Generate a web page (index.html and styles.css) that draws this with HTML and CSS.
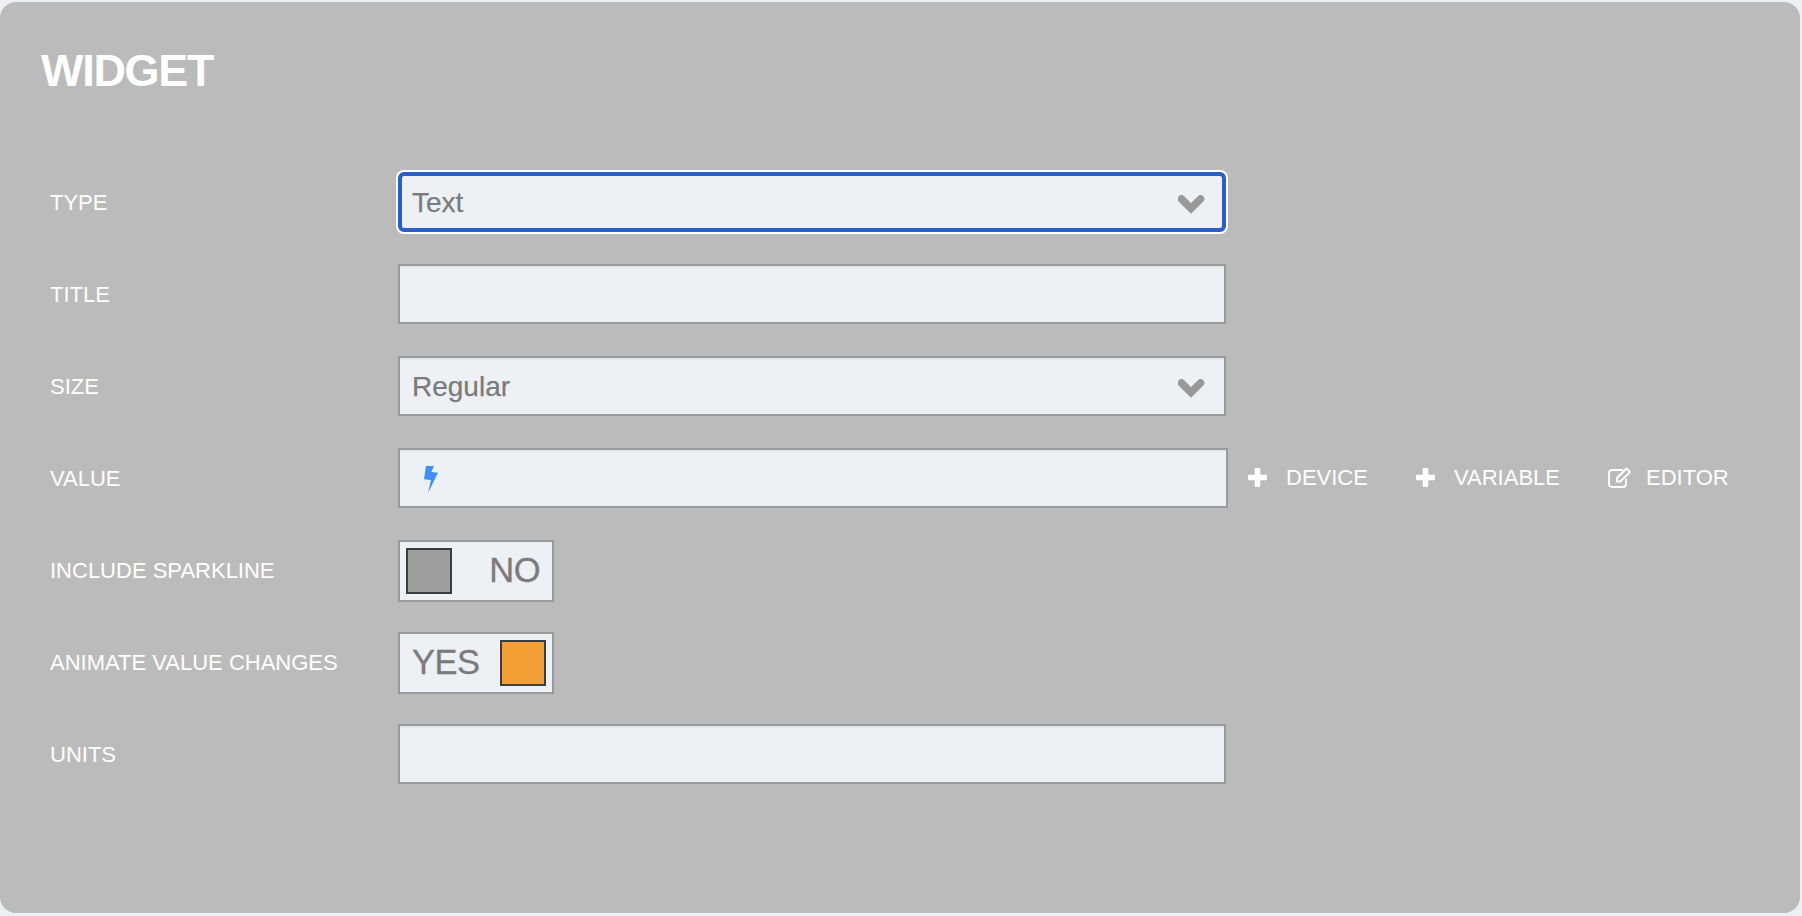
FILE: index.html
```html
<!DOCTYPE html>
<html lang="en">
<head>
<meta charset="utf-8">
<title>Widget</title>
<link rel="stylesheet" href="styles.css">
</head>
<body>
<main class="panel">
  <h1 class="title">WIDGET</h1>
  <form class="form">
    <div class="row">
      <label class="label">TYPE</label>
      <div class="field">
        <div class="box box-focus"><span class="box-text">Text</span>
          <svg class="chevron" viewBox="0 0 28 20"><polyline points="3.500,5 13,14.500 22.500,5"/></svg>
        </div>
      </div>
    </div>
    <div class="row">
      <label class="label">TITLE</label>
      <div class="field"><div class="box"></div></div>
    </div>
    <div class="row">
      <label class="label">SIZE</label>
      <div class="field">
        <div class="box"><span class="box-text">Regular</span>
          <svg class="chevron" viewBox="0 0 28 20"><polyline points="3.500,5 13,14.500 22.500,5"/></svg>
        </div>
      </div>
    </div>
    <div class="row">
      <label class="label">VALUE</label>
      <div class="field">
        <div class="box box-wide">
          <svg class="bolt" viewBox="0 0 14 28"><polygon points="2,0 10,0 7.300,6 14,6.700 4,27 7,14 0,13.300"/></svg>
        </div>
        <div class="actions">
          <span class="action action-device"><svg class="plus" viewBox="0 0 19 19"><path d="M6.700 1a1 1 0 0 1 1-1h3.600a1 1 0 0 1 1 1v5.700H18a1 1 0 0 1 1 1v3.600a1 1 0 0 1-1 1h-5.700V18a1 1 0 0 1-1 1H7.700a1 1 0 0 1-1-1v-5.700H1a1 1 0 0 1-1-1V7.700a1 1 0 0 1 1-1h5.700z"/></svg>DEVICE</span>
          <span class="action action-variable"><svg class="plus" viewBox="0 0 19 19"><path d="M6.700 1a1 1 0 0 1 1-1h3.600a1 1 0 0 1 1 1v5.700H18a1 1 0 0 1 1 1v3.600a1 1 0 0 1-1 1h-5.700V18a1 1 0 0 1-1 1H7.700a1 1 0 0 1-1-1v-5.700H1a1 1 0 0 1-1-1V7.700a1 1 0 0 1 1-1h5.700z"/></svg>VARIABLE</span>
          <span class="action action-editor"><svg class="edit" viewBox="0 0 24 21"><path class="edit-frame" d="M18 12v5a3 3 0 0 1-3 3H4a3 3 0 0 1-3-3V6a3 3 0 0 1 3-3h11"/><path class="edit-pen" d="M9 11 18.500 1.500l3.500 3.500L12.500 14.500H9z"/></svg>EDITOR</span>
        </div>
      </div>
    </div>
    <div class="row">
      <label class="label">INCLUDE SPARKLINE</label>
      <div class="field">
        <div class="toggle toggle-off"><span class="knob"></span><span class="toggle-text">NO</span></div>
      </div>
    </div>
    <div class="row">
      <label class="label">ANIMATE VALUE CHANGES</label>
      <div class="field">
        <div class="toggle toggle-on"><span class="toggle-text">YES</span><span class="knob"></span></div>
      </div>
    </div>
    <div class="row">
      <label class="label">UNITS</label>
      <div class="field"><div class="box"></div></div>
    </div>
  </form>
</main>
</body>
</html>
```
FILE: styles.css
```css
html, body {
  margin: 0;
  height: 100%;
}
body {
  background: #edf0f5;
  font-family: "Liberation Sans", Arial, sans-serif;
  padding: 2px 2px 3px 0;
  box-sizing: border-box;
  overflow: hidden;
}
.panel {
  height: 100%;
  box-sizing: border-box;
  background: #bbbbbb;
  border-radius: 16px;
  padding: 44px 0 0 50px;
}
.title {
  margin: 0 0 0 -9px;
  font-size: 45px;
  line-height: 50px;
  font-weight: 700;
  letter-spacing: -1.3px;
  color: #fff;
}
.form {
  margin-top: 76px;
  display: flex;
  flex-direction: column;
  gap: 32px;
}
.row {
  display: flex;
  align-items: center;
  height: 60px;
}
.label {
  width: 348px;
  flex: none;
  padding-top: 2px;
  font-size: 22px;
  color: #fff;
}
.field {
  display: flex;
  align-items: center;
}
.box {
  position: relative;
  box-sizing: border-box;
  width: 828px;
  height: 60px;
  display: flex;
  align-items: center;
  padding: 1px 0 0 12px;
  background: #edf0f5;
  border: 2px solid #9a9a9a;
  box-shadow: inset 0 2px 1px #e3e6ea;
}
.box-wide {
  width: 830px;
}
.box-focus {
  border: 4px solid #2a5fc8;
  border-radius: 6px;
  padding-left: 10px;
  box-shadow: 0 0 0 2px #fff;
}
.box-text {
  font-size: 28px;
  color: #7b7b7b;
  -webkit-text-stroke: 0.25px #7b7b7b;
}
.chevron {
  position: absolute;
  right: 18px;
  top: 50%;
  width: 28px;
  height: 20px;
  margin-top: 2px;
  transform: translateY(-50%);
  fill: none;
  stroke: #989898;
  stroke-width: 7.500;
  stroke-linejoin: miter;
  stroke-linecap: round;
}
.box-focus .chevron {
  right: 16px;
}
.bolt {
  width: 14px;
  height: 28px;
  margin: 2px 0 0 12px;
  fill: #3f8ef0;
}
.actions {
  display: flex;
  align-items: center;
  margin-left: 20px;
}
.action {
  display: flex;
  align-items: center;
  font-size: 22px;
  color: #fff;
}
.action-device { width: 168px; }
.action-variable { width: 192px; }
.plus {
  width: 19px;
  height: 19px;
  margin: -2px 19px 0 0;
  fill: #fff;
}
.edit {
  width: 24px;
  height: 21px;
  margin: -2px 14px 0 0;
  fill: none;
  stroke: #fff;
}
.edit-frame { stroke-width: 1.8; }
.edit-pen { stroke-width: 2; stroke-linejoin: round; }
.toggle {
  position: relative;
  top: 1px;
  box-sizing: border-box;
  width: 156px;
  height: 62px;
  display: flex;
  align-items: center;
  justify-content: space-between;
  padding: 0 6px;
  background: #edf0f5;
  border: 2px solid #9a9a9a;
}
.toggle-text {
  margin-top: -2px;
  font-size: 34.500px;
  letter-spacing: -0.5px;
  color: #7b7b7b;
  -webkit-text-stroke: 0.3px #7b7b7b;
}
.toggle-off .toggle-text { margin-right: 6px; }
.toggle-on .toggle-text { margin-left: 6px; }
.knob {
  box-sizing: border-box;
  width: 46px;
  height: 46px;
  border: 2px solid #3a3d42;
  background: #9e9e9e;
}
.toggle-on .knob {
  background: #f39f36;
}
```
